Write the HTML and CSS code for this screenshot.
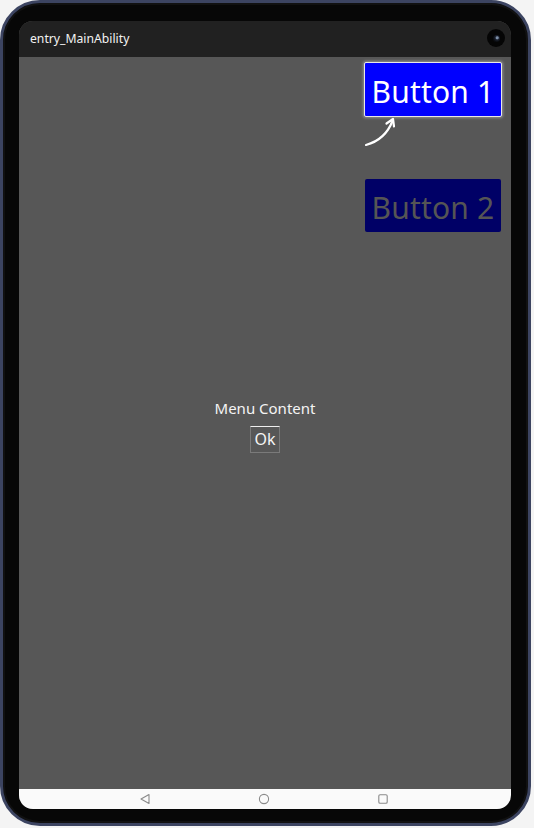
FILE: index.html
```html
<!DOCTYPE html>
<html>
<head>
<meta charset="utf-8">
<link rel="stylesheet" href="styles.css">
</head>
<body>
<div class="device">
  <div class="screen">
    <div class="titlebar">
      <span class="title">entry_MainAbility</span>
      <span class="camera"><span class="lens"></span></span>
    </div>
    <div class="content">
      <div class="buttons">
        <div class="btn btn1">Button 1</div>
        <div class="btn btn2">Button 2</div>
      </div>
      <svg class="tip-arrow" width="40" height="34" viewBox="0 0 40 34">
        <path d="M1 31 C 12 28, 22 21, 27.5 7" fill="none" stroke="#fff" stroke-width="2.2" stroke-linecap="round"/>
        <path d="M21.5 9.5 L 28 5 L 29 12.5" fill="none" stroke="#fff" stroke-width="2.2" stroke-linecap="round" stroke-linejoin="round"/>
      </svg>
      <div class="popup">
        <div class="menu-text">Menu Content</div>
        <div class="ok">Ok</div>
      </div>
    </div>
    <div class="navbar">
      <svg class="nav-icon" width="12" height="12" viewBox="0 0 12 12"><path d="M10 1.5 L2 6 L10 10.5 Z" fill="none" stroke="#8a8a8a" stroke-width="1.1" stroke-linejoin="round"/></svg>
      <svg class="nav-icon" width="12" height="12" viewBox="0 0 12 12"><circle cx="6" cy="6" r="4.6" fill="none" stroke="#8a8a8a" stroke-width="1.1"/></svg>
      <svg class="nav-icon" width="12" height="12" viewBox="0 0 12 12"><rect x="1.8" y="1.8" width="8.4" height="8.4" rx="1.3" fill="none" stroke="#8a8a8a" stroke-width="1.1"/></svg>
    </div>
  </div>
</div>
</body>
</html>
```
FILE: styles.css
```css
html, body {
  margin: 0;
  padding: 0;
}
body {
  background: #f4f4f4;
  width: 534px;
  height: 828px;
  overflow: hidden;
  font-family: "Noto Sans", "Open Sans", sans-serif;
}
.device {
  box-sizing: border-box;
  width: 531px;
  height: 826px;
  border: 3px solid #3c4461;
  border-radius: 40px;
  background: #070707;
  padding: 18px 17px 14px 16px;
  box-shadow: inset 0 0 0 2px #111;
}
.screen {
  height: 100%;
  display: flex;
  flex-direction: column;
  border-radius: 14px;
  overflow: hidden;
  background: #575757;
}
.titlebar {
  height: 36px;
  flex: none;
  background: #212121;
  display: flex;
  align-items: center;
  justify-content: space-between;
  padding: 0 6px 0 11px;
}
.title {
  color: #f2f2f2;
  font-size: 12.2px;
  margin-top: -1px;
}
.camera {
  width: 18px;
  height: 18px;
  border-radius: 50%;
  background: #050505;
  display: flex;
  align-items: center;
  justify-content: center;
  margin-top: -2px;
}
.lens {
  width: 7px;
  height: 7px;
  border-radius: 50%;
  background: radial-gradient(circle at 60% 40%, #7d8fa8 0 1px, #1c2230 2px, #0a0c10 4px);
}
.content {
  flex: 1;
  position: relative;
  background: #575757;
}
.buttons {
  display: flex;
  flex-direction: column;
  align-items: flex-end;
  padding: 5px 9px 0 0;
  gap: 62px;
}
.btn {
  box-sizing: border-box;
  height: 55px;
  display: flex;
  align-items: center;
  justify-content: center;
  font-size: 30px;
  border-radius: 2px;
  letter-spacing: 0.2px;
  padding-top: 3px;
}
.btn1 {
  width: 138px;
  background: #0000ff;
  color: #ffffff;
  border: 1px solid #e8e8e8;
  box-shadow: 0 0 3px 1px rgba(255,255,255,0.35);
}
.btn2 {
  width: 136px;
  height: 53px;
  background: #000066;
  color: #555555;
  margin-right: 1px;
}
.tip-arrow {
  position: absolute;
  left: 346px;
  top: 57px;
}
.popup {
  position: absolute;
  inset: 0;
  display: flex;
  flex-direction: column;
  align-items: center;
  justify-content: center;
  padding-top: 4px;
}
.menu-text {
  color: #f4f4f4;
  font-size: 15px;
  line-height: 20px;
}
.ok {
  margin-top: 8px;
  box-sizing: border-box;
  height: 27px;
  padding: 0 3px;
  border: 1px solid #7a7a7a;
  border-top: 1px solid #eeeeee;
  color: #f4f4f4;
  font-size: 16px;
  line-height: 25px;
}
.navbar {
  height: 20px;
  flex: none;
  background: #fafafa;
  display: flex;
  align-items: center;
  justify-content: space-between;
  padding: 0 122px 0 120px;
}
.nav-icon {
  display: block;
}
```
